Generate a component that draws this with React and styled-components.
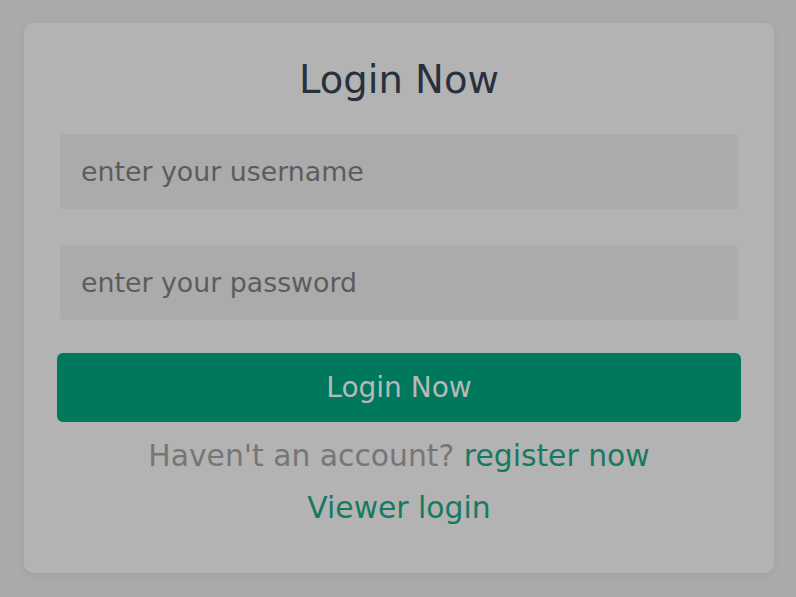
import styled, { createGlobalStyle } from "styled-components";

const GlobalStyle = createGlobalStyle`
  html, body {
    margin: 0;
    padding: 0;
    background: #aaaaaa;
    font-family: "DejaVu Sans", "Noto Sans", sans-serif;
  }
  * { box-sizing: border-box; }
`;

const Page = styled.div`
  width: 796px;
  height: 597px;
  padding: 23px 22px 24px 24px;
  display: flex;
  flex-direction: column;
`;

const Card = styled.form`
  width: 750px;
  height: 550px;
  background: #b3b3b3;
  border-radius: 9px;
  box-shadow: 0 2px 8px rgba(0, 0, 0, 0.06);
  padding: 34px 33px 0 33px;
  display: flex;
  flex-direction: column;
  align-items: center;
`;

const Title = styled.h2`
  margin: 0 0 31px;
  font-size: 38.5px;
  font-weight: 400;
  line-height: 46px;
  color: #28303d;
`;

const Field = styled.input`
  width: 678px;
  height: 75px;
  margin-bottom: 36px;
  border: none;
  outline: none;
  border-radius: 4px;
  background: #ababab;
  padding: 0 21px;
  font-family: inherit;
  font-size: 26.8px;
  color: #4d4d4d;
  &::placeholder {
    color: #5c5c5c;
  }
  &:last-of-type {
    margin-bottom: 33px;
  }
`;

const SubmitBtn = styled.button`
  width: 684px;
  height: 69px;
  border: none;
  border-radius: 6px;
  background: #00785d;
  color: #b8b8b8;
  font-family: inherit;
  font-size: 28px;
  cursor: pointer;
  margin-bottom: 14px;
`;

const Hint = styled.p`
  margin: 0;
  font-size: 29.8px;
  line-height: 40px;
  color: #767676;
  text-align: center;
`;

const LinkText = styled.a`
  color: #167a63;
  text-decoration: none;
  cursor: pointer;
`;

const ViewerLine = styled(Hint)`
  margin-top: 12px;
`;

export default function App() {
  return (
    <>
      <GlobalStyle />
      <Page>
        <Card onSubmit={(e) => e.preventDefault()}>
          <Title>Login Now</Title>
          <Field type="text" placeholder="enter your username" />
          <Field type="password" placeholder="enter your password" />
          <SubmitBtn type="submit">Login Now</SubmitBtn>
          <Hint>
            Haven't an account? <LinkText>register now</LinkText>
          </Hint>
          <ViewerLine>
            <LinkText>Viewer login</LinkText>
          </ViewerLine>
        </Card>
      </Page>
    </>
  );
}
